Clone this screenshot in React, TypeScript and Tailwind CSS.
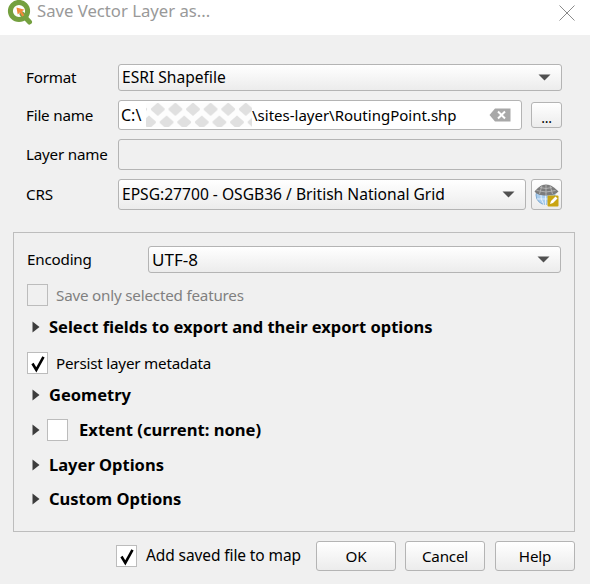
import React from "react";

const font = "font-['Noto_Sans','Open_Sans',sans-serif]";
const control = "rounded-[3px] border border-[#b4b4b4] bg-linear-to-b from-white to-[#ececec]";

function Caret() {
  return (
    <svg width="13" height="7" viewBox="0 0 13 7" className="shrink-0">
      <path d="M0.5 0.5h12l-6 6z" fill="#505050" />
    </svg>
  );
}

function Combo({ text, className, textClass }: { text: string; className: string; textClass: string }) {
  return (
    <div className={`flex items-center justify-between pl-[3px] pr-[10px] tracking-normal text-black ${control} ${className}`}>
      <span className={textClass}>{text}</span>
      <Caret />
    </div>
  );
}

function Tick() {
  return (
    <svg width="21" height="21" viewBox="0 0 21 21" className="block">
      <path d="M4.5 10.5l3.8 6.3L15.5 3.8" fill="none" stroke="#000" strokeWidth="2.6" />
    </svg>
  );
}

function Check({ checked, disabled }: { checked?: boolean; disabled?: boolean }) {
  return (
    <div className={`h-[22px] w-[21px] shrink-0 border border-[#bcbcbc] ${disabled ? "bg-[#f0f0f0]" : "bg-white"}`}>
      {checked && <Tick />}
    </div>
  );
}

function Arrow() {
  return (
    <svg width="8" height="12" viewBox="0 0 8 12" className="shrink-0">
      <path d="M0.5 0.5L7.5 6 0.5 11.5z" fill="#3c3c3c" />
    </svg>
  );
}

function Section({ label, className }: { label: string; className?: string }) {
  return (
    <div className={`flex h-[32px] items-center gap-[9px] pl-[18px] ${className ?? ""}`}>
      <Arrow />
      <span className="text-[16.5px] font-bold tracking-normal text-black">{label}</span>
    </div>
  );
}

function Logo() {
  return (
    <svg width="26" height="25" viewBox="0 0 26 25" className="shrink-0">
      <circle cx="12" cy="11" r="8.6" fill="#fff" stroke="#74a03f" strokeWidth="5" />
      <path d="M15 14l7.5 8" stroke="#74a03f" strokeWidth="5" strokeLinecap="round" />
      <path d="M9.5 7.5l8 2.2-2.6 1.6 2.4 4-2 1.3-2.4-4-2.2 2z" fill="#f0893a" />
    </svg>
  );
}

function Redaction() {
  return (
    <svg width="106" height="24" className="shrink-0">
      <defs>
        <pattern id="diamonds" width="17.6" height="26" patternUnits="userSpaceOnUse" patternTransform="translate(3,0)">
          <rect width="17.6" height="26" fill="#fdfdfd" />
          <path d="M8.8 -0.5L15.6 5.5V7L8.8 13 2 7V5.5z" fill="#e0e0e0" />
          <path d="M0 12.5L6.8 18.5V20L0 26zM17.6 12.5L10.8 18.5V20L17.6 26z" fill="#e0e0e0" />
        </pattern>
      </defs>
      <rect width="106" height="24" fill="url(#diamonds)" />
    </svg>
  );
}

function ClearIcon() {
  return (
    <svg width="22" height="14" viewBox="0 0 22 14" className="shrink-0">
      <path d="M6 0.5h15.5v13H6L0.5 7z" fill="#a8a8a8" />
      <path d="M9 3.5l7 7M16 3.5l-7 7" stroke="#fff" strokeWidth="2" />
    </svg>
  );
}

function Globe() {
  return (
    <svg width="26" height="26" viewBox="0 0 26 26" className="block">
      <circle cx="11.5" cy="13" r="9.5" fill="#a9cdee" stroke="#6a9bc8" strokeWidth="0.8" />
      <path d="M3 17h17M11.5 11v12M7 11q-1 6 3 12M16 11q1 6-3 12" stroke="#eaf3fb" strokeWidth="0.9" fill="none" />
      <path d="M12 2.5c5 0 9 3.5 12.5 7-3 3-7 4-12.5 4s-9-1-11.5-4C3.5 6 7 2.5 12 2.5z" fill="#7c7c7c" />
      <path d="M6 5.5q6 2 12 0M2.5 8.5q9.5 3 19 0M12 2.5v11M8 3.5L5.5 12M16 3.5L18.5 12" stroke="#bdbdbd" strokeWidth="0.8" fill="none" />
      <rect x="13.5" y="13.5" width="11" height="11" rx="1" fill="#c9a411" />
      <path d="M16 22l1-3 4.5-4.5 2 2-4.5 4.5z" fill="#fff" />
    </svg>
  );
}

function Btn({ label, className }: { label: string; className?: string }) {
  return (
    <div className={`flex h-[30px] w-[80px] items-center justify-center text-[15.2px] tracking-[-0.2px] text-black ${control} ${className ?? ""}`}>{label}</div>
  );
}

export default function App() {
  return (
    <div className={`flex h-[584px] w-[590px] flex-col overflow-hidden bg-[#f0f0f0] ${font}`}>
      <div className="flex h-[35px] shrink-0 items-start justify-between bg-white pl-[7px] pr-[15px]">
        <div className="flex items-center gap-[4px]">
          <Logo />
          <span className="-mt-[3px] text-[16.7px] text-[#999999]">Save Vector Layer as...</span>
        </div>
        <svg width="16" height="16" viewBox="0 0 16 16" className="mt-[5px]">
          <path d="M0.5 0.5l15 15M15.5 0.5l-15 15" stroke="#8a8a8a" strokeWidth="1" fill="none" />
        </svg>
      </div>

      <div className="flex flex-col pl-[26px] pr-[28px] pt-[29px] text-[15.2px] tracking-[-0.2px] text-black">
        <div className="flex h-[27px] items-center">
          <span className="w-[92px]">Format</span>
          <Combo text="ESRI Shapefile" textClass="text-[15.6px]" className="h-[27px] flex-1" />
        </div>
        <div className="mt-[9px] flex h-[30px] items-center">
          <span className="w-[92px]">File name</span>
          <div className="flex h-[30px] w-[404px] items-center rounded-[3px] border border-[#b4b4b4] bg-white pl-[2px] pr-[10px] tracking-normal">
            <span className="w-[25px] text-[16px]">C:\</span>
            <Redaction />
            <span className="text-[15px]">\sites-layer\RoutingPoint.shp</span>
            <span className="flex-1" />
            <ClearIcon />
          </div>
          <div className={`ml-[9px] flex h-[26px] w-[31px] items-center justify-center pt-[4px] text-[14px] ${control}`}>...</div>
        </div>
        <div className="mt-[9px] flex h-[31px] items-center">
          <span className="w-[92px]">Layer name</span>
          <div className="h-[31px] flex-1 rounded-[3px] border border-[#b4b4b4] bg-[#f0f0f0]" />
        </div>
        <div className="mt-[9px] flex h-[31px] items-center">
          <span className="w-[92px]">CRS</span>
          <Combo text="EPSG:27700 - OSGB36 / British National Grid" textClass="text-[15.6px]" className="h-[31px] w-[408px]" />
          <div className={`ml-[5px] flex h-[31px] w-[31px] items-center justify-center ${control}`}>
            <Globe />
          </div>
        </div>
      </div>

      <div className="ml-[13px] mt-[22px] h-[300px] w-[562px] shrink-0 border border-[#bdbdbd] pt-[13px] text-[15.2px] tracking-[-0.2px] text-black">
        <div className="flex h-[27px] items-center pl-[13px] pr-[13px]">
          <span className="w-[121px]">Encoding</span>
          <Combo text="UTF-8" textClass="text-[17px]" className="h-[27px] flex-1" />
        </div>
        <div className="mt-[6px] flex h-[32px] items-center gap-[8px] pl-[13px] text-[#808080]">
          <Check disabled />
          <span>Save only selected features</span>
        </div>
        <Section label="Select fields to export and their export options" />
        <div className="mt-[4px] flex h-[32px] items-center gap-[8px] pl-[13px]">
          <Check checked />
          <span>Persist layer metadata</span>
        </div>
        <Section label="Geometry" />
        <div className="mt-[3px] flex h-[32px] items-center pl-[18px]">
          <Arrow />
          <span className="ml-[7px]"><Check /></span>
          <span className="ml-[11px] text-[16.6px] font-bold tracking-normal">Extent (current: none)</span>
        </div>
        <Section label="Layer Options" className="mt-[3px]" />
        <Section label="Custom Options" className="mt-[2px]" />
      </div>

      <div className="mr-[15px] mt-[9px] flex h-[30px] shrink-0 items-center justify-end text-[15.5px] tracking-[-0.1px] text-black">
        <div className="flex items-center gap-[9px]">
          <Check checked />
          <span>Add saved file to map</span>
        </div>
        <div className="ml-[15px] flex">
          <Btn label="OK" />
          <Btn label="Cancel" className="ml-[9px]" />
          <Btn label="Help" className="ml-[10px]" />
        </div>
      </div>
    </div>
  );
}
